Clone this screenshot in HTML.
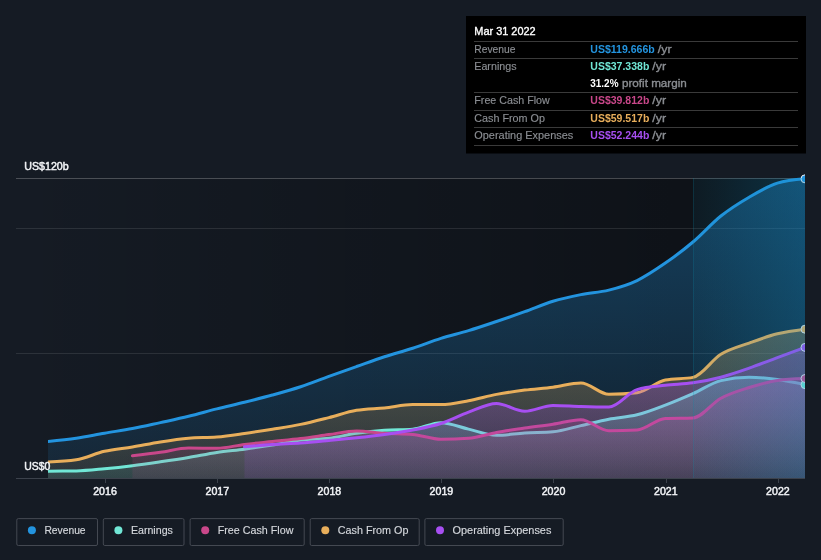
<!DOCTYPE html><html><head><meta charset="utf-8"><title>Earnings and Revenue History</title>
<style>html,body{margin:0;padding:0;background:#151b24;}body{width:821px;height:560px;overflow:hidden;font-family:"Liberation Sans",sans-serif;}svg{display:block;will-change:transform}text{font-family:"Liberation Sans",sans-serif;}</style></head><body>
<svg width="821" height="560" viewBox="0 0 821 560">
<defs>
<clipPath id="plot"><rect x="48" y="170" width="757" height="308.5"/></clipPath>
<linearGradient id="pbg" x1="0" y1="0" x2="1" y2="0"><stop offset="0" stop-color="#000" stop-opacity="0"/><stop offset="1" stop-color="#000" stop-opacity="0.4"/></linearGradient>
<linearGradient id="hl" x1="0" y1="0" x2="1" y2="0"><stop offset="0" stop-color="#0c8cb8" stop-opacity="0.07"/><stop offset="1" stop-color="#0f8fc4" stop-opacity="0.27"/></linearGradient>
<linearGradient id="grev" x1="0" y1="0" x2="0" y2="1"><stop offset="0" stop-color="#2394df" stop-opacity="0.36"/><stop offset="1" stop-color="#2394df" stop-opacity="0.1"/></linearGradient>
<linearGradient id="gear" x1="0" y1="0" x2="0" y2="1"><stop offset="0" stop-color="#71e7d6" stop-opacity="0.32"/><stop offset="1" stop-color="#71e7d6" stop-opacity="0.1"/></linearGradient>
<linearGradient id="gcfo" x1="0" y1="0" x2="0" y2="1"><stop offset="0" stop-color="#e8ae5b" stop-opacity="0.32"/><stop offset="1" stop-color="#e8ae5b" stop-opacity="0.1"/></linearGradient>
<linearGradient id="gfcf" x1="0" y1="0" x2="0" y2="1"><stop offset="0" stop-color="#c9478a" stop-opacity="0.32"/><stop offset="1" stop-color="#c9478a" stop-opacity="0.1"/></linearGradient>
<linearGradient id="gopx" x1="0" y1="0" x2="0" y2="1"><stop offset="0" stop-color="#a74ff2" stop-opacity="0.32"/><stop offset="1" stop-color="#a74ff2" stop-opacity="0.1"/></linearGradient>
</defs>
<rect width="821" height="560" fill="#151b24"/>
<rect x="16" y="178" width="789" height="300" fill="url(#pbg)"/>
<rect x="16" y="178" width="789" height="1" fill="#fff" fill-opacity="0.23"/>
<rect x="16" y="228" width="789" height="1" fill="#fff" fill-opacity="0.1"/>
<rect x="16" y="353" width="789" height="1" fill="#fff" fill-opacity="0.1"/>
<g clip-path="url(#plot)">
<path d="M48.00,441.40C57.41,440.47,66.83,439.53,76.24,438.16C85.66,436.79,95.07,434.78,104.48,433.18C113.79,431.59,123.11,430.35,132.42,428.58C141.73,426.82,151.04,424.63,160.35,422.60C169.77,420.55,179.18,418.61,188.59,416.32C198.01,414.04,207.42,411.27,216.84,408.90C226.05,406.59,235.25,404.57,244.46,402.28C253.78,399.96,263.09,397.64,272.40,395.07C281.81,392.47,291.23,389.89,300.64,386.77C310.05,383.66,319.47,379.78,328.88,376.37C338.09,373.03,347.30,369.78,356.51,366.53C365.82,363.25,375.13,359.79,384.44,356.76C393.86,353.69,403.27,351.32,412.69,348.26C422.10,345.20,431.51,341.37,440.93,338.40C450.14,335.51,459.35,333.43,468.56,330.63C477.87,327.80,487.18,324.63,496.49,321.49C505.90,318.32,515.32,315.05,524.73,311.68C534.15,308.31,543.56,304.11,552.97,301.26C562.29,298.43,571.60,296.47,580.91,294.61C590.22,292.75,599.53,292.42,608.84,290.11C618.26,287.76,627.67,285.06,637.08,280.56C646.50,276.06,655.91,269.60,665.33,263.09C674.54,256.71,683.74,249.79,692.95,242.00C702.27,234.12,711.58,223.47,720.89,216.02C730.30,208.50,739.72,202.65,749.13,197.18C758.54,191.70,767.96,186.14,777.37,183.18C786.58,180.28,795.79,179.56,805.00,178.84L805.00,478L48.00,478Z" fill="url(#grev)"/>
<path d="M48.00,441.40C57.41,440.47,66.83,439.53,76.24,438.16C85.66,436.79,95.07,434.78,104.48,433.18C113.79,431.59,123.11,430.35,132.42,428.58C141.73,426.82,151.04,424.63,160.35,422.60C169.77,420.55,179.18,418.61,188.59,416.32C198.01,414.04,207.42,411.27,216.84,408.90C226.05,406.59,235.25,404.57,244.46,402.28C253.78,399.96,263.09,397.64,272.40,395.07C281.81,392.47,291.23,389.89,300.64,386.77C310.05,383.66,319.47,379.78,328.88,376.37C338.09,373.03,347.30,369.78,356.51,366.53C365.82,363.25,375.13,359.79,384.44,356.76C393.86,353.69,403.27,351.32,412.69,348.26C422.10,345.20,431.51,341.37,440.93,338.40C450.14,335.51,459.35,333.43,468.56,330.63C477.87,327.80,487.18,324.63,496.49,321.49C505.90,318.32,515.32,315.05,524.73,311.68C534.15,308.31,543.56,304.11,552.97,301.26C562.29,298.43,571.60,296.47,580.91,294.61C590.22,292.75,599.53,292.42,608.84,290.11C618.26,287.76,627.67,285.06,637.08,280.56C646.50,276.06,655.91,269.60,665.33,263.09C674.54,256.71,683.74,249.79,692.95,242.00C702.27,234.12,711.58,223.47,720.89,216.02C730.30,208.50,739.72,202.65,749.13,197.18C758.54,191.70,767.96,186.14,777.37,183.18C786.58,180.28,795.79,179.56,805.00,178.84" fill="none" stroke="#2394df" stroke-width="3" stroke-linecap="round" stroke-linejoin="round" stroke-opacity="1"/>
<path d="M48.00,461.90C57.41,461.55,66.83,461.20,76.24,459.80C85.66,458.40,95.07,453.45,104.48,451.30C113.79,449.17,123.11,448.47,132.42,446.90C141.73,445.33,151.04,443.34,160.35,441.90C169.77,440.44,179.18,439.00,188.59,438.20C198.01,437.40,207.42,437.80,216.84,437.00C226.05,436.22,235.25,434.79,244.46,433.50C253.78,432.19,263.09,430.71,272.40,429.20C281.81,427.68,291.23,426.33,300.64,424.40C310.05,422.47,319.47,419.98,328.88,417.60C338.09,415.27,347.30,411.88,356.51,410.30C365.82,408.70,375.13,408.84,384.44,407.90C393.86,406.95,403.27,404.60,412.69,404.60C422.10,404.60,431.51,404.60,440.93,404.60C450.14,404.60,459.35,402.39,468.56,400.70C477.87,398.99,487.18,396.16,496.49,394.40C505.90,392.62,515.32,391.30,524.73,390.10C534.15,388.90,543.56,388.41,552.97,387.20C562.29,386.00,571.60,382.90,580.91,382.90C590.22,382.90,599.53,394.30,608.84,394.30C618.26,394.30,627.67,393.80,637.08,392.80C646.50,391.80,655.91,381.77,665.33,380.00C674.54,378.27,683.74,379.13,692.95,377.40C702.27,375.65,711.58,360.01,720.89,354.30C730.30,348.53,739.72,346.52,749.13,343.10C758.54,339.68,767.96,336.13,777.37,333.80C786.58,331.53,795.79,330.36,805.00,329.20L805.00,478L48.00,478Z" fill="url(#gcfo)"/>
<path d="M48.00,461.90C57.41,461.55,66.83,461.20,76.24,459.80C85.66,458.40,95.07,453.45,104.48,451.30C113.79,449.17,123.11,448.47,132.42,446.90C141.73,445.33,151.04,443.34,160.35,441.90C169.77,440.44,179.18,439.00,188.59,438.20C198.01,437.40,207.42,437.80,216.84,437.00C226.05,436.22,235.25,434.79,244.46,433.50C253.78,432.19,263.09,430.71,272.40,429.20C281.81,427.68,291.23,426.33,300.64,424.40C310.05,422.47,319.47,419.98,328.88,417.60C338.09,415.27,347.30,411.88,356.51,410.30C365.82,408.70,375.13,408.84,384.44,407.90C393.86,406.95,403.27,404.60,412.69,404.60C422.10,404.60,431.51,404.60,440.93,404.60C450.14,404.60,459.35,402.39,468.56,400.70C477.87,398.99,487.18,396.16,496.49,394.40C505.90,392.62,515.32,391.30,524.73,390.10C534.15,388.90,543.56,388.41,552.97,387.20C562.29,386.00,571.60,382.90,580.91,382.90C590.22,382.90,599.53,394.30,608.84,394.30C618.26,394.30,627.67,393.80,637.08,392.80C646.50,391.80,655.91,381.77,665.33,380.00C674.54,378.27,683.74,379.13,692.95,377.40C702.27,375.65,711.58,360.01,720.89,354.30C730.30,348.53,739.72,346.52,749.13,343.10C758.54,339.68,767.96,336.13,777.37,333.80C786.58,331.53,795.79,330.36,805.00,329.20" fill="none" stroke="#e8ae5b" stroke-width="3" stroke-linecap="round" stroke-linejoin="round" stroke-opacity="1"/>
<path d="M48.00,471.15C57.41,471.12,66.83,471.08,76.24,470.93C85.66,470.78,95.07,469.65,104.48,468.78C113.79,467.91,123.11,466.88,132.42,465.71C141.73,464.55,151.04,463.17,160.35,461.80C169.77,460.42,179.18,459.03,188.59,457.48C198.01,455.92,207.42,453.86,216.84,452.46C226.05,451.09,235.25,450.36,244.46,449.14C253.78,447.92,263.09,446.64,272.40,445.12C281.81,443.57,291.23,441.08,300.64,439.92C310.05,438.76,319.47,439.28,328.88,438.17C338.09,437.07,347.30,434.66,356.51,433.36C365.82,432.04,375.13,431.01,384.44,430.33C393.86,429.64,403.27,429.97,412.69,429.25C422.10,428.54,431.51,422.72,440.93,422.72C450.14,422.72,459.35,427.02,468.56,429.12C477.87,431.23,487.18,435.34,496.49,435.34C505.90,435.34,515.32,433.55,524.73,432.96C534.15,432.37,543.56,432.57,552.97,431.79C562.29,431.02,571.60,427.70,580.91,425.61C590.22,423.51,599.53,420.99,608.84,419.20C618.26,417.39,627.67,417.16,637.08,414.81C646.50,412.47,655.91,408.71,665.33,405.13C674.54,401.64,683.74,397.71,692.95,393.65C702.27,389.54,711.58,382.83,720.89,380.61C730.30,378.36,739.72,377.24,749.13,377.24C758.54,377.24,767.96,378.31,777.37,379.57C786.58,380.81,795.79,382.73,805.00,384.65L805.00,478L48.00,478Z" fill="url(#gear)"/>
<path d="M48.00,471.15C57.41,471.12,66.83,471.08,76.24,470.93C85.66,470.78,95.07,469.65,104.48,468.78C113.79,467.91,123.11,466.88,132.42,465.71C141.73,464.55,151.04,463.17,160.35,461.80C169.77,460.42,179.18,459.03,188.59,457.48C198.01,455.92,207.42,453.86,216.84,452.46C226.05,451.09,235.25,450.36,244.46,449.14C253.78,447.92,263.09,446.64,272.40,445.12C281.81,443.57,291.23,441.08,300.64,439.92C310.05,438.76,319.47,439.28,328.88,438.17C338.09,437.07,347.30,434.66,356.51,433.36C365.82,432.04,375.13,431.01,384.44,430.33C393.86,429.64,403.27,429.97,412.69,429.25C422.10,428.54,431.51,422.72,440.93,422.72C450.14,422.72,459.35,427.02,468.56,429.12C477.87,431.23,487.18,435.34,496.49,435.34C505.90,435.34,515.32,433.55,524.73,432.96C534.15,432.37,543.56,432.57,552.97,431.79C562.29,431.02,571.60,427.70,580.91,425.61C590.22,423.51,599.53,420.99,608.84,419.20C618.26,417.39,627.67,417.16,637.08,414.81C646.50,412.47,655.91,408.71,665.33,405.13C674.54,401.64,683.74,397.71,692.95,393.65C702.27,389.54,711.58,382.83,720.89,380.61C730.30,378.36,739.72,377.24,749.13,377.24C758.54,377.24,767.96,378.31,777.37,379.57C786.58,380.81,795.79,382.73,805.00,384.65" fill="none" stroke="#71e7d6" stroke-width="3" stroke-linecap="round" stroke-linejoin="round" stroke-opacity="1"/>
<path d="M132.42,455.80C141.73,454.70,151.04,453.59,160.35,452.30C169.77,450.99,179.18,448.00,188.59,448.00C198.01,448.00,207.42,448.30,216.84,448.30C226.05,448.30,235.25,445.53,244.46,444.40C253.78,443.26,263.09,442.46,272.40,441.50C281.81,440.53,291.23,439.75,300.64,438.60C310.05,437.45,319.47,435.90,328.88,434.60C338.09,433.33,347.30,430.90,356.51,430.90C365.82,430.90,375.13,432.72,384.44,433.30C393.86,433.89,403.27,433.67,412.69,434.40C422.10,435.13,431.51,439.30,440.93,439.30C450.14,439.30,459.35,438.97,468.56,438.30C477.87,437.63,487.18,434.09,496.49,432.40C505.90,430.69,515.32,429.47,524.73,428.10C534.15,426.73,543.56,425.61,552.97,424.20C562.29,422.81,571.60,419.70,580.91,419.70C590.22,419.70,599.53,430.70,608.84,430.70C618.26,430.70,627.67,430.43,637.08,429.90C646.50,429.37,655.91,418.91,665.33,418.50C674.54,418.10,683.74,418.30,692.95,417.90C702.27,417.50,711.58,403.26,720.89,398.20C730.30,393.09,739.72,390.47,749.13,387.50C758.54,384.53,767.96,381.69,777.37,380.40C786.58,379.13,795.79,378.82,805.00,378.50L805.00,478L132.42,478Z" fill="url(#gfcf)"/>
<path d="M132.42,455.80C141.73,454.70,151.04,453.59,160.35,452.30C169.77,450.99,179.18,448.00,188.59,448.00C198.01,448.00,207.42,448.30,216.84,448.30C226.05,448.30,235.25,445.53,244.46,444.40C253.78,443.26,263.09,442.46,272.40,441.50C281.81,440.53,291.23,439.75,300.64,438.60C310.05,437.45,319.47,435.90,328.88,434.60C338.09,433.33,347.30,430.90,356.51,430.90C365.82,430.90,375.13,432.72,384.44,433.30C393.86,433.89,403.27,433.67,412.69,434.40C422.10,435.13,431.51,439.30,440.93,439.30C450.14,439.30,459.35,438.97,468.56,438.30C477.87,437.63,487.18,434.09,496.49,432.40C505.90,430.69,515.32,429.47,524.73,428.10C534.15,426.73,543.56,425.61,552.97,424.20C562.29,422.81,571.60,419.70,580.91,419.70C590.22,419.70,599.53,430.70,608.84,430.70C618.26,430.70,627.67,430.43,637.08,429.90C646.50,429.37,655.91,418.91,665.33,418.50C674.54,418.10,683.74,418.30,692.95,417.90C702.27,417.50,711.58,403.26,720.89,398.20C730.30,393.09,739.72,390.47,749.13,387.50C758.54,384.53,767.96,381.69,777.37,380.40C786.58,379.13,795.79,378.82,805.00,378.50" fill="none" stroke="#c9478a" stroke-width="3" stroke-linecap="round" stroke-linejoin="round" stroke-opacity="1"/>
<path d="M244.46,446.80C253.78,445.92,263.09,445.05,272.40,444.40C281.81,443.74,291.23,443.57,300.64,442.90C310.05,442.23,319.47,441.28,328.88,440.40C338.09,439.54,347.30,438.69,356.51,437.70C365.82,436.70,375.13,435.67,384.44,434.40C393.86,433.11,403.27,431.82,412.69,430.00C422.10,428.18,431.51,426.52,440.93,423.50C450.14,420.55,459.35,415.52,468.56,412.20C477.87,408.84,487.18,403.50,496.49,403.50C505.90,403.50,515.32,411.30,524.73,411.30C534.15,411.30,543.56,405.50,552.97,405.50C562.29,405.50,571.60,406.33,580.91,406.60C590.22,406.87,599.53,407.10,608.84,407.10C618.26,407.10,627.67,392.47,637.08,389.60C646.50,386.73,655.91,386.44,665.33,385.30C674.54,384.19,683.74,384.14,692.95,382.80C702.27,381.45,711.58,379.61,720.89,377.20C730.30,374.76,739.72,371.47,749.13,368.20C758.54,364.93,767.96,361.10,777.37,357.60C786.58,354.17,795.79,350.79,805.00,347.40L805.00,478L244.46,478Z" fill="url(#gopx)"/>
<path d="M244.46,446.80C253.78,445.92,263.09,445.05,272.40,444.40C281.81,443.74,291.23,443.57,300.64,442.90C310.05,442.23,319.47,441.28,328.88,440.40C338.09,439.54,347.30,438.69,356.51,437.70C365.82,436.70,375.13,435.67,384.44,434.40C393.86,433.11,403.27,431.82,412.69,430.00C422.10,428.18,431.51,426.52,440.93,423.50C450.14,420.55,459.35,415.52,468.56,412.20C477.87,408.84,487.18,403.50,496.49,403.50C505.90,403.50,515.32,411.30,524.73,411.30C534.15,411.30,543.56,405.50,552.97,405.50C562.29,405.50,571.60,406.33,580.91,406.60C590.22,406.87,599.53,407.10,608.84,407.10C618.26,407.10,627.67,392.47,637.08,389.60C646.50,386.73,655.91,386.44,665.33,385.30C674.54,384.19,683.74,384.14,692.95,382.80C702.27,381.45,711.58,379.61,720.89,377.20C730.30,374.76,739.72,371.47,749.13,368.20C758.54,364.93,767.96,361.10,777.37,357.60C786.58,354.17,795.79,350.79,805.00,347.40" fill="none" stroke="#a74ff2" stroke-width="3" stroke-linecap="round" stroke-linejoin="round" stroke-opacity="1"/>
<circle cx="805.00" cy="178.84" r="4" fill="#2394df" stroke="#e6e9ee" stroke-width="1"/>
<circle cx="805.00" cy="329.20" r="4" fill="#e8ae5b" stroke="#e6e9ee" stroke-width="1"/>
<circle cx="805.00" cy="384.65" r="4" fill="#71e7d6" stroke="#e6e9ee" stroke-width="1"/>
<circle cx="805.00" cy="378.50" r="4" fill="#c9478a" stroke="#e6e9ee" stroke-width="1"/>
<circle cx="805.00" cy="347.40" r="4" fill="#a74ff2" stroke="#e6e9ee" stroke-width="1"/>
<rect x="693" y="178" width="112" height="300" fill="url(#hl)"/>
<rect x="693" y="178" width="1" height="300" fill="#0a8caa" fill-opacity="0.2"/>
</g>
<rect x="16" y="478" width="789" height="1" fill="#3c424c"/>
<rect x="105" y="479" width="1" height="4" fill="#3c424c"/>
<text x="105.0" y="495" font-size="11" font-weight="normal" fill="#f0f2f5" textLength="23.6" lengthAdjust="spacingAndGlyphs" stroke="#f0f2f5" stroke-width="0.5" stroke-linejoin="round" text-anchor="middle">2016</text>
<rect x="217" y="479" width="1" height="4" fill="#3c424c"/>
<text x="217.3" y="495" font-size="11" font-weight="normal" fill="#f0f2f5" textLength="23.6" lengthAdjust="spacingAndGlyphs" stroke="#f0f2f5" stroke-width="0.5" stroke-linejoin="round" text-anchor="middle">2017</text>
<rect x="329" y="479" width="1" height="4" fill="#3c424c"/>
<text x="329.4" y="495" font-size="11" font-weight="normal" fill="#f0f2f5" textLength="23.6" lengthAdjust="spacingAndGlyphs" stroke="#f0f2f5" stroke-width="0.5" stroke-linejoin="round" text-anchor="middle">2018</text>
<rect x="441" y="479" width="1" height="4" fill="#3c424c"/>
<text x="441.4" y="495" font-size="11" font-weight="normal" fill="#f0f2f5" textLength="23.6" lengthAdjust="spacingAndGlyphs" stroke="#f0f2f5" stroke-width="0.5" stroke-linejoin="round" text-anchor="middle">2019</text>
<rect x="553" y="479" width="1" height="4" fill="#3c424c"/>
<text x="553.5" y="495" font-size="11" font-weight="normal" fill="#f0f2f5" textLength="23.6" lengthAdjust="spacingAndGlyphs" stroke="#f0f2f5" stroke-width="0.5" stroke-linejoin="round" text-anchor="middle">2020</text>
<rect x="666" y="479" width="1" height="4" fill="#3c424c"/>
<text x="665.8" y="495" font-size="11" font-weight="normal" fill="#f0f2f5" textLength="23.6" lengthAdjust="spacingAndGlyphs" stroke="#f0f2f5" stroke-width="0.5" stroke-linejoin="round" text-anchor="middle">2021</text>
<rect x="778" y="479" width="1" height="4" fill="#3c424c"/>
<text x="777.9" y="495" font-size="11" font-weight="normal" fill="#f0f2f5" textLength="23.6" lengthAdjust="spacingAndGlyphs" stroke="#f0f2f5" stroke-width="0.5" stroke-linejoin="round" text-anchor="middle">2022</text>
<text x="24.2" y="170" font-size="11" font-weight="normal" fill="#f0f2f5" textLength="44.5" lengthAdjust="spacingAndGlyphs" stroke="#f0f2f5" stroke-width="0.5" stroke-linejoin="round">US$120b</text>
<text x="24.2" y="470" font-size="11" font-weight="normal" fill="#f0f2f5" textLength="26.1" lengthAdjust="spacingAndGlyphs" stroke="#f0f2f5" stroke-width="0.5" stroke-linejoin="round">US$0</text>
<rect x="466" y="16" width="340" height="137.5" fill="#000"/>
<rect x="474" y="41" width="324" height="1" fill="#3a3a3a"/>
<rect x="474" y="58" width="324" height="1" fill="#3a3a3a"/>
<rect x="474" y="92" width="324" height="1" fill="#3a3a3a"/>
<rect x="474" y="110" width="324" height="1" fill="#3a3a3a"/>
<rect x="474" y="127" width="324" height="1" fill="#3a3a3a"/>
<rect x="474" y="145" width="324" height="1" fill="#3a3a3a"/>
<text x="474.3" y="35.2" font-size="11" font-weight="normal" fill="#fff" textLength="61.4" lengthAdjust="spacingAndGlyphs" stroke="#fff" stroke-width="0.35" stroke-linejoin="round">Mar 31 2022</text>
<text x="474.3" y="52.9" font-size="11" font-weight="normal" fill="#8b8e93" textLength="41.2" lengthAdjust="spacingAndGlyphs" stroke="#8b8e93" stroke-width="0.15" stroke-linejoin="round">Revenue</text>
<text x="590.3" y="52.9" font-size="11" font-weight="bold" fill="#2394df" textLength="64.5" lengthAdjust="spacingAndGlyphs">US$119.666b</text>
<text x="657.8" y="52.9" font-size="11" font-weight="normal" fill="#8b8e93" textLength="13.8" lengthAdjust="spacingAndGlyphs" stroke="#8b8e93" stroke-width="0.35" stroke-linejoin="round">/yr</text>
<text x="474.3" y="69.8" font-size="11" font-weight="normal" fill="#8b8e93" textLength="42.2" lengthAdjust="spacingAndGlyphs" stroke="#8b8e93" stroke-width="0.15" stroke-linejoin="round">Earnings</text>
<text x="590.3" y="69.8" font-size="11" font-weight="bold" fill="#71e7d6" textLength="59" lengthAdjust="spacingAndGlyphs">US$37.338b</text>
<text x="652.3" y="69.8" font-size="11" font-weight="normal" fill="#8b8e93" textLength="13.8" lengthAdjust="spacingAndGlyphs" stroke="#8b8e93" stroke-width="0.35" stroke-linejoin="round">/yr</text>
<text x="474.3" y="103.8" font-size="11" font-weight="normal" fill="#8b8e93" textLength="75.4" lengthAdjust="spacingAndGlyphs" stroke="#8b8e93" stroke-width="0.15" stroke-linejoin="round">Free Cash Flow</text>
<text x="590.3" y="103.8" font-size="11" font-weight="bold" fill="#c9478a" textLength="59" lengthAdjust="spacingAndGlyphs">US$39.812b</text>
<text x="652.3" y="103.8" font-size="11" font-weight="normal" fill="#8b8e93" textLength="13.8" lengthAdjust="spacingAndGlyphs" stroke="#8b8e93" stroke-width="0.35" stroke-linejoin="round">/yr</text>
<text x="474.3" y="121.8" font-size="11" font-weight="normal" fill="#8b8e93" textLength="70.6" lengthAdjust="spacingAndGlyphs" stroke="#8b8e93" stroke-width="0.15" stroke-linejoin="round">Cash From Op</text>
<text x="590.3" y="121.8" font-size="11" font-weight="bold" fill="#e8ae5b" textLength="59" lengthAdjust="spacingAndGlyphs">US$59.517b</text>
<text x="652.3" y="121.8" font-size="11" font-weight="normal" fill="#8b8e93" textLength="13.8" lengthAdjust="spacingAndGlyphs" stroke="#8b8e93" stroke-width="0.35" stroke-linejoin="round">/yr</text>
<text x="474.3" y="138.9" font-size="11" font-weight="normal" fill="#8b8e93" textLength="98.9" lengthAdjust="spacingAndGlyphs" stroke="#8b8e93" stroke-width="0.15" stroke-linejoin="round">Operating Expenses</text>
<text x="590.3" y="138.9" font-size="11" font-weight="bold" fill="#a74ff2" textLength="59" lengthAdjust="spacingAndGlyphs">US$52.244b</text>
<text x="652.3" y="138.9" font-size="11" font-weight="normal" fill="#8b8e93" textLength="13.8" lengthAdjust="spacingAndGlyphs" stroke="#8b8e93" stroke-width="0.35" stroke-linejoin="round">/yr</text>
<text x="590.3" y="86.7" font-size="11" font-weight="bold" fill="#fff" textLength="28.2" lengthAdjust="spacingAndGlyphs">31.2%</text>
<text x="622" y="86.7" font-size="11" font-weight="normal" fill="#8b8e93" textLength="64.8" lengthAdjust="spacingAndGlyphs" stroke="#8b8e93" stroke-width="0.35" stroke-linejoin="round">profit margin</text>
<rect x="16.8" y="518.6" width="80.7" height="26.9" rx="1.5" fill="none" stroke="#444952" stroke-width="1"/>
<circle cx="31.9" cy="530.2" r="4" fill="#2394df"/>
<text x="44.4" y="534" font-size="11" font-weight="normal" fill="#d5d8dd" textLength="41.2" lengthAdjust="spacingAndGlyphs" stroke="#d5d8dd" stroke-width="0.15" stroke-linejoin="round">Revenue</text>
<rect x="103.3" y="518.6" width="80.7" height="26.9" rx="1.5" fill="none" stroke="#444952" stroke-width="1"/>
<circle cx="118.4" cy="530.2" r="4" fill="#71e7d6"/>
<text x="130.9" y="534" font-size="11" font-weight="normal" fill="#d5d8dd" textLength="42" lengthAdjust="spacingAndGlyphs" stroke="#d5d8dd" stroke-width="0.15" stroke-linejoin="round">Earnings</text>
<rect x="190.1" y="518.6" width="114.1" height="26.9" rx="1.5" fill="none" stroke="#444952" stroke-width="1"/>
<circle cx="205.2" cy="530.2" r="4" fill="#c9478a"/>
<text x="217.70000000000002" y="534" font-size="11" font-weight="normal" fill="#d5d8dd" textLength="75.7" lengthAdjust="spacingAndGlyphs" stroke="#d5d8dd" stroke-width="0.15" stroke-linejoin="round">Free Cash Flow</text>
<rect x="310.2" y="518.6" width="109.0" height="26.9" rx="1.5" fill="none" stroke="#444952" stroke-width="1"/>
<circle cx="325.3" cy="530.2" r="4" fill="#e8ae5b"/>
<text x="337.79999999999995" y="534" font-size="11" font-weight="normal" fill="#d5d8dd" textLength="70.6" lengthAdjust="spacingAndGlyphs" stroke="#d5d8dd" stroke-width="0.15" stroke-linejoin="round">Cash From Op</text>
<rect x="424.9" y="518.6" width="138.3" height="26.9" rx="1.5" fill="none" stroke="#444952" stroke-width="1"/>
<circle cx="440.0" cy="530.2" r="4" fill="#a74ff2"/>
<text x="452.5" y="534" font-size="11" font-weight="normal" fill="#d5d8dd" textLength="98.9" lengthAdjust="spacingAndGlyphs" stroke="#d5d8dd" stroke-width="0.15" stroke-linejoin="round">Operating Expenses</text>
</svg></body></html>
